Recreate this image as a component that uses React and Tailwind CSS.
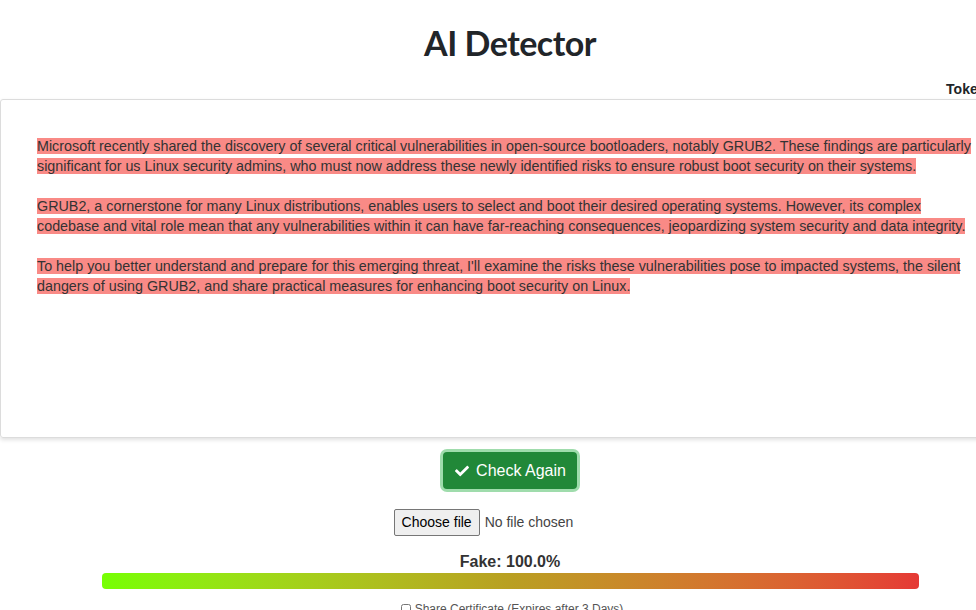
import React from 'react';

const paragraphs = [
  'Microsoft recently shared the discovery of several critical vulnerabilities in open-source bootloaders, notably GRUB2. These findings are particularly significant for us Linux security admins, who must now address these newly identified risks to ensure robust boot security on their systems.',
  'GRUB2, a cornerstone for many Linux distributions, enables users to select and boot their desired operating systems. However, its complex codebase and vital role mean that any vulnerabilities within it can have far-reaching consequences, jeopardizing system security and data integrity.',
  "To help you better understand and prepare for this emerging threat, I'll examine the risks these vulnerabilities pose to impacted systems, the silent dangers of using GRUB2, and share practical measures for enhancing boot security on Linux.",
];

export default function App() {
  return (
    <div className="w-[976px] h-[610px] overflow-hidden bg-white" style={{ fontFamily: '"Liberation Sans", Arial, sans-serif' }}>
      <div className="w-[1020px]">
        <h1
          className="text-center text-[34px] font-bold text-[#212529] pt-[20px] leading-[46px] tracking-[-0.5px]"
          style={{ fontFamily: 'Lato, "Open Sans", sans-serif' }}
        >
          AI Detector
        </h1>

        <div className="flex justify-end mt-[13px] h-[20px] mr-[-6px]">
          <span className="text-[14px] font-bold text-[#212529]">Tokens: 176</span>
        </div>

        <div className="h-[339px] border border-[#dcdcdc] rounded-[3px] shadow-[0_2px_4px_rgba(0,0,0,0.12)] px-[36px] pt-[36px]">
          {paragraphs.map((p, i) => (
            <p key={i} className="text-[14.33px] leading-[20px] text-[#333] mb-[20px]">
              <span className="bg-[#f98a86]">{p}</span>
            </p>
          ))}
        </div>

        <div className="flex justify-center mt-[14px]">
          <button className="flex items-center gap-[6px] h-[37px] px-[11px] bg-[#218838] text-white text-[16px] rounded-[4px] ring-[3px] ring-[#9fdcac]">
            <svg width="16" height="14" viewBox="0 0 512 512" fill="currentColor">
              <path d="M173.9 439.4l-166.4-166.4c-10-10-10-26.2 0-36.2l36.2-36.2c10-10 26.2-10 36.2 0L192 312.7 432.1 72.6c10-10 26.2-10 36.2 0l36.2 36.2c10 10 10 26.2 0 36.2L210.1 439.4c-10 10-26.2 10-36.2 0z" />
            </svg>
            Check Again
          </button>
        </div>

        <div className="flex justify-center items-center gap-[5px] mt-[20px] mr-[53px] text-[14px]">
          <button className="h-[27px] px-[7px] border border-[#767676] rounded-[2px] bg-[#efefef] text-black">Choose file</button>
          <span className="text-[#444]">No file chosen</span>
        </div>

        <div className="text-center mt-[15px] text-[16px] font-bold text-[#333] leading-[22px]">Fake: 100.0%</div>

        <div className="mx-[102px] w-[817px] mt-0 h-[16px] rounded-[4px] bg-gradient-to-r from-[#76ff03] via-[#b99f22] to-[#e53935]"></div>

        <div className="flex justify-center items-center gap-[4px] mt-[11px] ml-[4px] text-[12px] text-[#555]">
          <input type="checkbox" className="w-[10px] h-[10px]" />
          <span>Share Certificate (Expires after 3 Days)</span>
        </div>
      </div>
    </div>
  );
}
